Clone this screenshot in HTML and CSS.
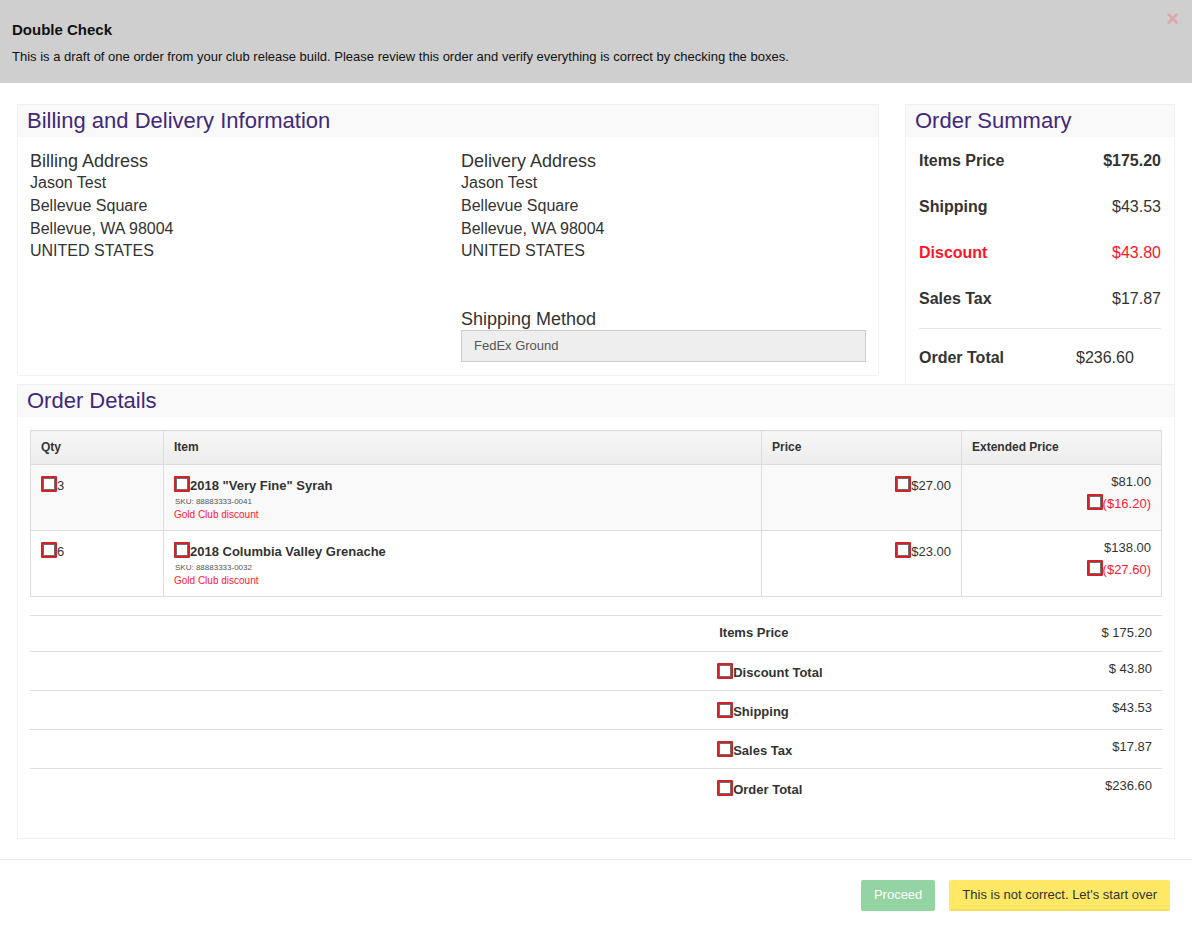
FILE: index.html
```html
<!DOCTYPE html>
<html lang="en">
<head>
<meta charset="utf-8">
<title>Double Check</title>
<link rel="stylesheet" href="styles.css">
</head>
<body>
<div class="modal">
  <div class="modal-header">
    <span class="close">&times;</span>
    <h4 class="modal-title">Double Check</h4>
    <p class="intro">This is a draft of one order from your club release build. Please review this order and verify everything is correct by checking the boxes.</p>
  </div>

  <div class="modal-body">
    <div class="top-row">
      <section class="panel billing">
        <div class="panel-heading"><h3>Billing and Delivery Information</h3></div>
        <div class="panel-body address-grid">
          <div class="addr">
            <h4>Billing Address</h4>
            <div>Jason Test</div>
            <div>Bellevue Square</div>
            <div>Bellevue, WA 98004</div>
            <div>UNITED STATES</div>
          </div>
          <div class="addr">
            <h4>Delivery Address</h4>
            <div>Jason Test</div>
            <div>Bellevue Square</div>
            <div>Bellevue, WA 98004</div>
            <div>UNITED STATES</div>
            <h4 class="ship-title">Shipping Method</h4>
            <div class="ship-box">FedEx Ground</div>
          </div>
        </div>
      </section>

      <section class="panel summary">
        <div class="panel-heading"><h3>Order Summary</h3></div>
        <div class="summary-body">
          <div class="sum-row"><span class="lbl">Items Price</span><span class="val strong">$175.20</span></div>
          <div class="sum-row"><span class="lbl">Shipping</span><span class="val">$43.53</span></div>
          <div class="sum-row red"><span class="lbl">Discount</span><span class="val">$43.80</span></div>
          <div class="sum-row"><span class="lbl">Sales Tax</span><span class="val">$17.87</span></div>
          <hr class="sum-hr">
          <div class="sum-total"><span class="lbl">Order Total</span><span class="val">$236.60</span></div>
        </div>
      </section>
    </div>

    <section class="panel details">
      <div class="panel-heading"><h3>Order Details</h3></div>
      <div class="panel-body details-body">
        <table class="items">
          <thead>
            <tr>
              <th class="c-qty">Qty</th>
              <th class="c-item">Item</th>
              <th class="c-price">Price</th>
              <th class="c-ext">Extended Price</th>
            </tr>
          </thead>
          <tbody>
            <tr class="odd">
              <td><span class="cb"></span>3</td>
              <td>
                <div class="item-name"><span class="cb"></span>2018 "Very Fine" Syrah</div>
                <div class="sku">SKU: 88883333-0041</div>
                <div class="disc">Gold Club discount</div>
              </td>
              <td class="right"><span class="cb"></span>$27.00</td>
              <td class="right">
                <div class="ext">$81.00</div>
                <div class="ext-disc"><span class="cb"></span>($16.20)</div>
              </td>
            </tr>
            <tr>
              <td><span class="cb"></span>6</td>
              <td>
                <div class="item-name"><span class="cb"></span>2018 Columbia Valley Grenache</div>
                <div class="sku">SKU: 88883333-0032</div>
                <div class="disc">Gold Club discount</div>
              </td>
              <td class="right"><span class="cb"></span>$23.00</td>
              <td class="right">
                <div class="ext">$138.00</div>
                <div class="ext-disc"><span class="cb"></span>($27.60)</div>
              </td>
            </tr>
          </tbody>
        </table>

        <table class="totals">
          <tr class="first">
            <td class="t-empty"></td>
            <td class="t-lbl plain">Items Price</td>
            <td class="t-val">$ 175.20</td>
          </tr>
          <tr>
            <td class="t-empty"></td>
            <td class="t-lbl"><span class="cb"></span>Discount Total</td>
            <td class="t-val">$ 43.80</td>
          </tr>
          <tr>
            <td class="t-empty"></td>
            <td class="t-lbl"><span class="cb"></span>Shipping</td>
            <td class="t-val">$43.53</td>
          </tr>
          <tr>
            <td class="t-empty"></td>
            <td class="t-lbl"><span class="cb"></span>Sales Tax</td>
            <td class="t-val">$17.87</td>
          </tr>
          <tr>
            <td class="t-empty"></td>
            <td class="t-lbl"><span class="cb"></span>Order Total</td>
            <td class="t-val">$236.60</td>
          </tr>
        </table>
      </div>
    </section>
  </div>

  <div class="modal-footer">
    <button class="btn btn-proceed">Proceed</button>
    <button class="btn btn-warn">This is not correct. Let's start over</button>
  </div>
</div>
</body>
</html>
```

FILE: styles.css
```css
* { box-sizing: border-box; }

html, body {
  margin: 0;
  padding: 0;
  background: #fff;
}

body {
  font-family: "Liberation Sans", Arial, Helvetica, sans-serif;
  font-size: 13px;
  line-height: 1.42857;
  color: #333;
}

.modal {
  width: 100%;
  min-height: 929px;
}

/* ---------- header ---------- */
.modal-header {
  position: relative;
  background: #cfcfcf;
  padding: 20px 12px 17px;
}

.modal-title {
  margin: 0;
  font-size: 15px;
  line-height: 20px;
  font-weight: bold;
  color: #111;
}

.intro {
  margin: 8px 0 0;
  font-size: 13px;
  line-height: 18px;
  color: #111;
}

.close {
  position: absolute;
  top: 6px;
  right: 13px;
  font-size: 22px;
  line-height: 26px;
  font-weight: bold;
  color: #dea5ad;
}

/* ---------- body ---------- */
.modal-body {
  padding: 21px 17px 20px;
}

.top-row {
  display: flex;
  align-items: flex-start;
  gap: 26px;
}

.panel {
  border: 1px solid #f1f1f1;
  background: #fff;
}

.panel-heading {
  background: #f9f9f9;
  height: 32px;
  padding: 0 9px;
}

.panel-heading h3 {
  margin: 0;
  font-size: 22px;
  line-height: 32px;
  font-weight: normal;
  color: #41287a;
}

.billing {
  flex: 0 0 862px;
}

.summary {
  flex: 1 1 auto;
  border-bottom: 0;
}

.address-grid {
  display: grid;
  grid-template-columns: 431px 1fr;
  padding: 14px 12px 13px;
}

.addr h4 {
  margin: 0;
  font-size: 18px;
  line-height: 21px;
  font-weight: normal;
  color: #333;
}

.addr div {
  font-size: 16px;
  line-height: 22.8px;
}

.addr .ship-title {
  margin-top: 46px;
}

.addr .ship-box {
  margin-top: 0;
  height: 32px;
  border: 1px solid #ccc;
  background: #eee;
  color: #555;
  font-size: 13px;
  line-height: 30px;
  padding: 0 12px;
}

/* summary */
.summary-body {
  padding: 1px 13px 0;
}

.sum-row {
  display: flex;
  justify-content: space-between;
  height: 46px;
  align-items: center;
  font-size: 16px;
}

.sum-row .lbl,
.sum-total .lbl {
  font-weight: bold;
}

.sum-row .val.strong {
  font-weight: bold;
}

.sum-row.red {
  color: #ff1428;
}

.sum-hr {
  border: 0;
  border-top: 1px solid #e6e6e6;
  margin: 6px 0 0;
}

.sum-total {
  display: grid;
  grid-template-columns: 157px 1fr;
  font-size: 16px;
  line-height: 22px;
  padding: 18px 0 15px;
}

/* details */
.details-body {
  padding: 13px 12px 31px;
}

table {
  border-collapse: collapse;
  width: 100%;
}

.items {
  border: 1px solid #ddd;
}

.items th,
.items td {
  border: 1px solid #ddd;
  padding: 8px 10px;
  vertical-align: top;
  text-align: left;
}

.items th {
  font-size: 12px;
  line-height: 17px;
  font-weight: bold;
  background: linear-gradient(#f7f7f7, #ececec);
}

.items .c-qty { width: 133px; }
.items .c-item { width: 598px; }
.items .c-price { width: 200px; }

.items td {
  font-size: 13px;
  line-height: 18px;
}

.items tr.odd td {
  background: #f9f9f9;
}

.items td.right {
  text-align: right;
}

.item-name {
  font-weight: bold;
}

.sku {
  font-size: 8px;
  line-height: 13px;
  color: #555;
  margin-left: 1px;
}

.disc {
  font-size: 10px;
  line-height: 14px;
  color: #ff1a30;
}

.ext-disc {
  color: #ff1a30;
}

.cb {
  display: inline-block;
  width: 16px;
  height: 16px;
  border: 2px solid #cf2229;
  background: #fff;
  box-shadow: inset 0 0 0 1px #6f6f6f;
  border-radius: 1px;
  margin-top: 3px;
  margin-bottom: -2px;
  vertical-align: baseline;
}

/* totals */
.totals {
  margin-top: 18px;
}

.totals td {
  border-top: 1px solid #ddd;
  padding: 8px 10px;
  font-size: 13px;
  line-height: 18px;
  vertical-align: top;
}

.totals tr.first td { padding-bottom: 9px; }

.totals .t-empty { width: 60%; }
.totals .t-lbl { width: 20%; font-weight: bold; padding-left: 8px; }
.totals .t-lbl.plain { padding-left: 10px; }
.totals .t-val { text-align: right; }

/* ---------- footer ---------- */
.modal-footer {
  border-top: 1px solid #e5e5e5;
  padding: 20px 22px 18px;
  display: flex;
  justify-content: flex-end;
  gap: 14px;
}

.btn {
  font-family: "Liberation Sans", Arial, Helvetica, sans-serif;
  font-size: 13px;
  line-height: 18px;
  padding: 6px 13px 7px;
  border: 0;
  border-radius: 2px;
  cursor: pointer;
}

.btn-proceed {
  background: #94d3a2;
  color: #fff;
}

.btn-warn {
  background: #ffe866;
  color: #333;
  border-bottom: 2px solid #f4dc5c;
  padding-bottom: 5px;
}
```
